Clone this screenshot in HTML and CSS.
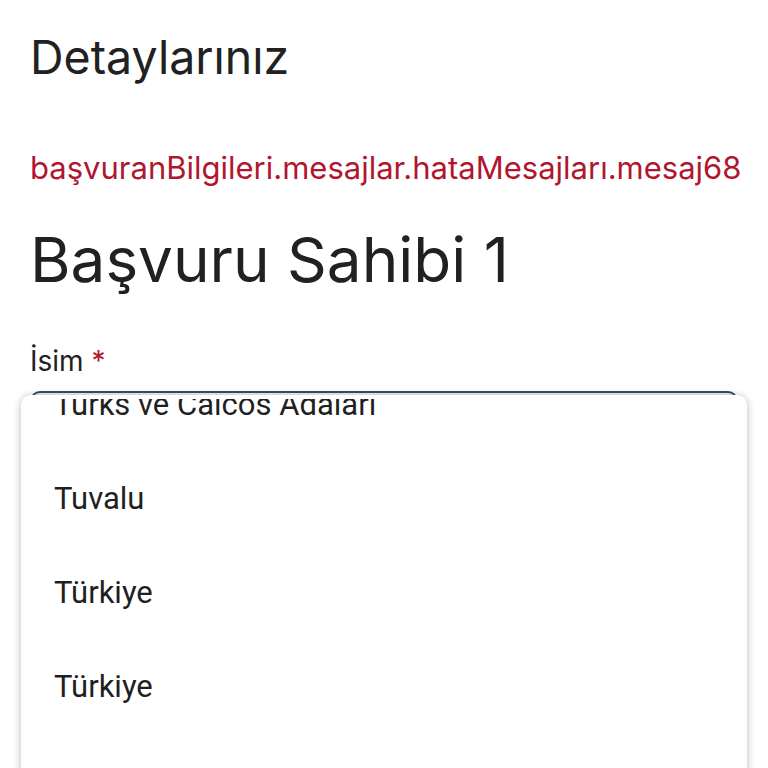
FILE: index.html
```html
<!DOCTYPE html>
<html lang="tr">
<head>
<meta charset="utf-8">
<link rel="stylesheet" href="styles.css">
</head>
<body>
<main class="page">
  <h2 class="section-title">Detaylarınız</h2>
  <p class="error-msg">başvuranBilgileri.mesajlar.hataMesajları.mesaj68</p>
  <h1 class="applicant-title">Başvuru Sahibi 1</h1>
  <label class="field-label">İsim <span class="req">*</span></label>
  <div class="field-input"></div>
  <div class="dropdown">
    <div class="scroller">
      <ul class="options">
        <li class="option">Turks ve Caicos Adaları</li>
        <li class="option">Tuvalu</li>
        <li class="option">Türkiye</li>
        <li class="option">Türkiye</li>
        <li class="option">Uganda</li>
      </ul>
    </div>
  </div>
</main>
</body>
</html>
```
FILE: styles.css
```css
html, body {
  margin: 0;
  padding: 0;
  background: #ffffff;
}
body {
  width: 768px;
  height: 768px;
  overflow: hidden;
  font-family: Inter, "Noto Sans", sans-serif;
  color: #212121;
}
.page {
  position: relative;
  padding: 29px 30px 0 30px;
  display: flex;
  flex-direction: column;
}
.section-title {
  margin: 0;
  font-size: 46.5px;
  line-height: 56px;
  font-weight: 400;
}
.error-msg {
  margin: 64px 0 0 0;
  font-size: 31px;
  line-height: 38px;
  color: #b1162f;
}
.applicant-title {
  margin: 35px 0 0 0;
  font-size: 62px;
  line-height: 75px;
  font-weight: 400;
}
.field-label {
  margin-top: 47px;
  font-size: 28px;
  line-height: 34px;
}
.req {
  color: #b1162f;
}
.field-input {
  margin-top: 13px;
  height: 60px;
  border: 2px solid #3d4b5c;
  border-radius: 10px;
  background: #eef4fa;
}
.dropdown {
  position: absolute;
  top: 395px;
  left: 21px;
  width: 726px;
  height: 420px;
  padding-top: 4px;
  box-sizing: border-box;
  background: #ffffff;
  border-radius: 10px;
  box-shadow: 0 1px 8px rgba(0, 0, 0, 0.28);
  overflow: hidden;
}
.scroller {
  height: 100%;
  overflow: hidden;
}
.options {
  list-style: none;
  margin: -41px 0 0 0;
  padding: 0;
}
.option {
  height: 94px;
  display: flex;
  align-items: center;
  padding-left: 33px;
  font-family: Roboto, "Liberation Sans", sans-serif;
  font-size: 31px;
  line-height: 36px;
  color: #1f1f1f;
}
```
